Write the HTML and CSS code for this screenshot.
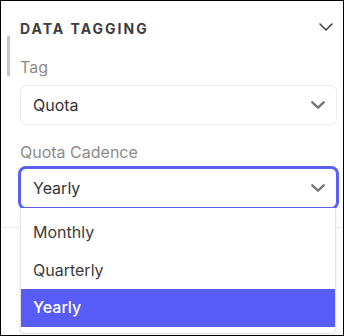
FILE: index.html
```html
<!DOCTYPE html>
<html>
<head>
<meta charset="utf-8">
<link rel="stylesheet" href="styles.css">
</head>
<body>
<div class="frame">
  <div class="scroll-thumb"></div>
  <section class="panel">
    <div class="panel-head">
      <h2 class="panel-title">DATA TAGGING</h2>
      <svg class="head-chevron" width="14" height="8" viewBox="0 0 14 8"><path d="M1 1 L7 7 L13 1" fill="none" stroke="#444" stroke-width="1.6" stroke-linecap="round" stroke-linejoin="round"/></svg>
    </div>
    <div class="field">
      <div class="field-label">Tag</div>
      <div class="select">
        <span class="select-value">Quota</span>
        <svg class="select-chevron" width="14" height="8" viewBox="0 0 14 8"><path d="M1.3 1.3 L7 6.7 L12.7 1.3" fill="none" stroke="#767676" stroke-width="2.4" stroke-linecap="round" stroke-linejoin="round"/></svg>
      </div>
    </div>
    <div class="field">
      <div class="field-label">Quota Cadence</div>
      <div class="select-wrap">
        <div class="select is-open">
          <span class="select-value">Yearly</span>
          <svg class="select-chevron" width="14" height="8" viewBox="0 0 14 8"><path d="M1.3 1.3 L7 6.7 L12.7 1.3" fill="none" stroke="#767676" stroke-width="2.4" stroke-linecap="round" stroke-linejoin="round"/></svg>
        </div>
        <ul class="menu">
          <li class="menu-item">Monthly</li>
          <li class="menu-item">Quarterly</li>
          <li class="menu-item is-selected">Yearly</li>
        </ul>
      </div>
    </div>
  </section>
</div>
</body>
</html>
```
FILE: styles.css
```css
html, body {
  margin: 0;
  padding: 0;
  background: #fff;
}
body {
  font-family: Inter, "Noto Sans", sans-serif;
}
.frame {
  position: relative;
  width: 344px;
  height: 336px;
  box-sizing: border-box;
  border: 1px solid #000;
  background: #fff;
  overflow: hidden;
}
.scroll-thumb {
  position: absolute;
  left: 6px;
  top: 35px;
  width: 3px;
  height: 40px;
  background: #c6c6c6;
}
.panel {
  padding: 18px 6px 19px 19px;
  border-bottom: 1px solid #ececec;
}
.panel-head {
  display: flex;
  justify-content: space-between;
  align-items: flex-start;
  height: 20px;
}
.panel-title {
  margin: 0;
  font-size: 14px;
  line-height: 20px;
  font-weight: 700;
  letter-spacing: 2px;
  color: #3e3e3e;
}
.head-chevron {
  display: block;
  margin-top: 4px;
  margin-right: 4px;
}
.field {
  display: flex;
  flex-direction: column;
}
.field + .field {
  margin-top: 17px;
}
.panel-head + .field {
  margin-top: 18px;
}
.field-label {
  font-size: 16px;
  line-height: 20px;
  color: #8c8c8c;
  margin-bottom: 8px;
}
.field + .field .field-label {
  margin-bottom: 6px;
}
.select {
  display: flex;
  align-items: center;
  justify-content: space-between;
  height: 40px;
  box-sizing: border-box;
  border: 1px solid #ececec;
  border-radius: 6px;
  padding: 0 11px 0 12px;
  background: #fff;
}
.select-value {
  font-size: 16px;
  color: #333;
}
.select-chevron {
  display: block;
}
.select.is-open {
  border-color: #5a5ff2;
  box-shadow: 0 0 0 2px #5a5ff2;
}
.select-wrap {
  position: relative;
}
.menu {
  position: absolute;
  left: 0;
  right: 1px;
  top: 40px;
  margin: 0;
  padding: 6px 0;
  list-style: none;
  background: #fff;
  border: 1px solid #e4e4e4;
  border-top: none;
  border-radius: 0 0 4px 4px;
  box-shadow: 0 2px 4px rgba(0,0,0,0.06);
  z-index: 2;
}
.menu-item {
  height: 37.5px;
  line-height: 37.5px;
  padding-left: 12px;
  font-size: 16px;
  color: #3c3c3c;
}
.menu-item.is-selected {
  background: #575cf6;
  color: #fff;
  font-weight: 500;
}
```
